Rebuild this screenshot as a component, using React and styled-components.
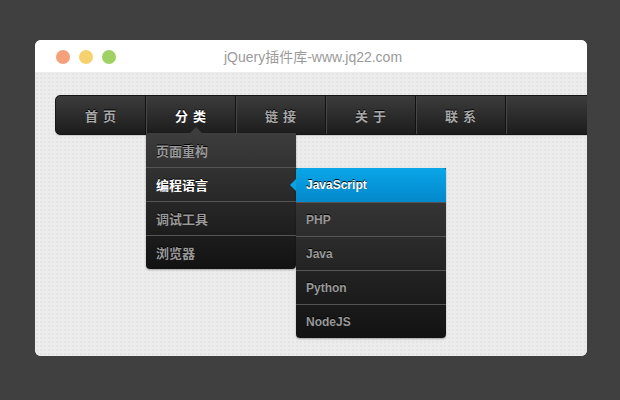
import React from "react";
import styled, { createGlobalStyle } from "styled-components";

const Global = createGlobalStyle`
  html, body { margin: 0; padding: 0; background: #404040; }
  body { font-family: "Liberation Sans", "Noto Sans CJK SC", sans-serif; }
`;

const Page = styled.div`
  padding: 40px 33px 0 35px;
  height: 400px;
  box-sizing: border-box;
`;

const Window = styled.div`
  width: 552px;
  height: 316px;
  border-radius: 6px;
  overflow: hidden;
  background: #ececec;
  display: flex;
  flex-direction: column;
`;

const TitleBar = styled.div`
  height: 32px;
  flex: none;
  background: #fff;
  display: flex;
  align-items: center;
  position: relative;
  padding-left: 21px;
  gap: 9px;
`;

const Dot = styled.span`
  width: 14px;
  height: 14px;
  border-radius: 50%;
  background: ${(p) => p.$c};
  margin-top: 1px;
`;

const Title = styled.div`
  position: absolute;
  left: 0;
  right: 0;
  top: 0;
  bottom: 0;
  display: flex;
  align-items: center;
  justify-content: center;
  color: #9a9a9a;
  font-size: 14px;
  font-family: "Liberation Sans", "Noto Sans CJK SC", sans-serif;
  padding-left: 4px;
`;

const Content = styled.div`
  flex: 1;
  padding: 23px 0 0 20px;
  background-color: #ececec;
  background-image: radial-gradient(#e4e4e4 0.8px, transparent 1px);
  background-size: 4px 4px;
`;

const Nav = styled.ul`
  list-style: none;
  margin: 0;
  padding: 0;
  width: 620px;
  height: 40px;
  display: flex;
  box-sizing: border-box;
  border-radius: 5px;
  border: 1px solid #151515;
  background: linear-gradient(#3c3c3c, #1c1c1c);
  box-shadow: 0 1px 1px rgba(0, 0, 0, 0.15);
`;

const NavItem = styled.li`
  position: relative;
  width: 90px;
  flex: none;
  box-sizing: border-box;
  border-right: 1px solid #111;
  box-shadow: 1px 0 0 #474747;
  display: flex;
  align-items: center;
  justify-content: center;
  color: ${(p) => (p.$active ? "#fff" : "#a8a8a8")};
  font-size: 13px;
  font-weight: bold;
  letter-spacing: 5px;
  text-indent: 5px;
  text-shadow: 0 -1px 0 #000;
`;

const Menu = styled.ul`
  position: absolute;
  list-style: none;
  margin: 0;
  padding: 0;
  left: ${(p) => p.$left}px;
  top: ${(p) => p.$top}px;
  width: 150px;
  border-radius: 0 0 4px 4px;
  background: linear-gradient(#3d3d3d, #121212);
  box-shadow: 0 1px 2px rgba(0, 0, 0, 0.3);
  letter-spacing: 0;
  text-indent: 0;
  z-index: ${(p) => p.$z || 1};
`;

const UpArrow = styled.span`
  position: absolute;
  left: 44px;
  top: -6px;
  width: 0;
  height: 0;
  border-left: 6px solid transparent;
  border-right: 6px solid transparent;
  border-bottom: 6px solid #3d3d3d;
`;

const MenuItem = styled.li`
  position: relative;
  height: 34px;
  box-sizing: border-box;
  display: flex;
  align-items: center;
  padding-left: 10px;
  border-top: ${(p) => (p.$first ? "none" : "1px solid #555")};
  color: ${(p) => (p.$active ? "#fff" : "#999")};
  font-size: ${(p) => (p.$latin ? "12px" : "13px")};
  font-weight: bold;
  text-shadow: 0 -1px 0 #000;
  background: ${(p) =>
    p.$blue ? "linear-gradient(#0aa6e8, #0388cb)" : "transparent"};
  border-radius: ${(p) => (p.$blue ? "2px 2px 0 0" : "0")};
`;

const LeftArrow = styled.span`
  position: absolute;
  left: -6px;
  top: 11px;
  width: 0;
  height: 0;
  border-top: 6px solid transparent;
  border-bottom: 6px solid transparent;
  border-right: 6px solid #0aa2e3;
`;

const menu1 = ["页面重构", "编程语言", "调试工具", "浏览器"];
const menu2 = ["JavaScript", "PHP", "Java", "Python", "NodeJS"];

export default function App() {
  return (
    <>
      <Global />
      <Page>
        <Window>
          <TitleBar>
            <Dot $c="#f4a07b" />
            <Dot $c="#f6d26f" />
            <Dot $c="#9fd163" />
            <Title>jQuery插件库-www.jq22.com</Title>
          </TitleBar>
          <Content>
            <Nav>
              <NavItem>首页</NavItem>
              <NavItem $active>
                分类
                <Menu $left={0} $top={37}>
                  <UpArrow />
                  {menu1.map((t, i) => (
                    <MenuItem key={t} $first={i === 0} $active={i === 1}>
                      {t}
                      {i === 1 && (
                        <Menu $left={150} $top={0} $z={2}>
                          {menu2.map((s, j) => (
                            <MenuItem
                              key={s}
                              $latin
                              $first={j === 0}
                              $blue={j === 0}
                              $active={j === 0}
                            >
                              {j === 0 && <LeftArrow />}
                              {s}
                            </MenuItem>
                          ))}
                        </Menu>
                      )}
                    </MenuItem>
                  ))}
                </Menu>
              </NavItem>
              <NavItem>链接</NavItem>
              <NavItem>关于</NavItem>
              <NavItem>联系</NavItem>
            </Nav>
          </Content>
        </Window>
      </Page>
    </>
  );
}
